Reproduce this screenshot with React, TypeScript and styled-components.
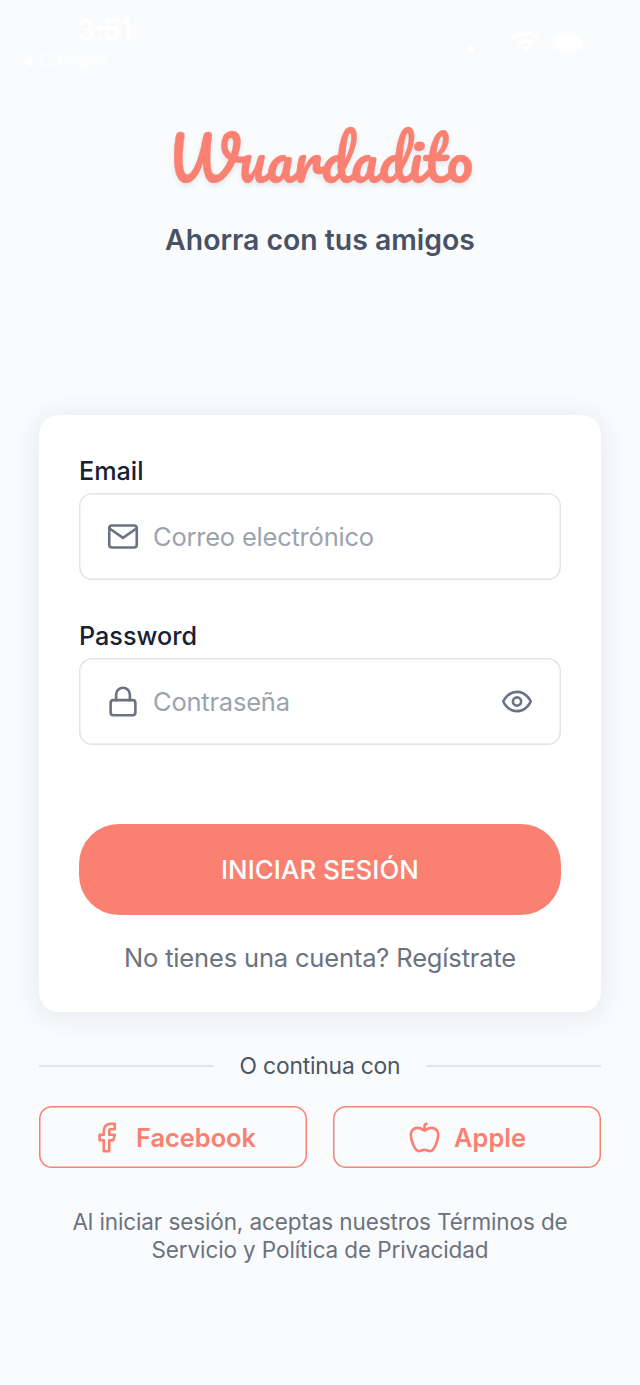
import React from "react";
import styled, { createGlobalStyle } from "styled-components";

const salmon = "#fa8072";

const GlobalStyle = createGlobalStyle`
  * { box-sizing: border-box; }
  body {
    margin: 0;
    background: #f9fbfd;
    font-family: Inter, "Liberation Sans", sans-serif;
  }
  button, input { font: inherit; }
`;

const Screen = styled.div`
  width: 640px;
  height: 1385px;
  display: flex;
  flex-direction: column;
  overflow: hidden;
`;

const StatusBar = styled.header`
  display: flex;
  justify-content: space-between;
  height: 113px;
  padding: 13px 42px 0 20px;
  color: #fff;
`;

const Clock = styled.div`
  padding-left: 57px;
  font-size: 28px;
  line-height: 34px;
  font-weight: 600;
  letter-spacing: -0.4px;
`;

const BackLink = styled.div`
  display: flex;
  align-items: center;
  gap: 6px;
  margin-top: 4px;
  font-size: 19px;
  line-height: 22px;
  letter-spacing: -0.2px;
`;

const StatusIcons = styled.svg`
  width: 132px;
  height: 24px;
  margin-top: 17px;
`;

const Logo = styled.h1`
  margin: 0;
  height: 90px;
  line-height: 90px;
  text-align: center;
  font-family: Pacifico, cursive;
  font-size: 59px;
  font-weight: 400;
  color: ${salmon};
  -webkit-text-stroke: 0.3px ${salmon};
  text-shadow: 0 3px 5px rgba(40, 60, 90, 0.1);
`;

const Tagline = styled.p`
  margin: 19px 0 0;
  text-align: center;
  font-size: 28.4px;
  line-height: 36px;
  font-weight: 600;
  color: #475264;
`;

const Card = styled.form`
  margin: 157px 39px 0;
  height: 597px;
  padding: 39px 40px 0;
  border-radius: 20px;
  background: #fff;
  box-shadow: 0 3px 26px rgba(60, 90, 120, 0.12);
`;

const Field = styled.div`
  margin-bottom: 39px;
`;

const Label = styled.label`
  display: block;
  height: 39px;
  line-height: 34px;
  font-size: 25.2px;
  font-weight: 500;
  color: #172135;
`;

const InputBox = styled.div`
  display: flex;
  align-items: center;
  gap: 13px;
  height: 87px;
  padding: 0 27px;
  box-shadow: inset 0 0 0 1.5px #e2e4ea;
  border-radius: 13px;
`;

const Input = styled.input`
  flex: 1;
  min-width: 0;
  padding: 0;
  border: 0;
  outline: 0;
  background: none;
  font-size: 25.5px;
  letter-spacing: -0.22px;
  color: #172135;
  &::placeholder { color: #9ca3af; opacity: 1; }
`;

const Glyph = styled.svg`
  flex: none;
  width: 33px;
  height: 33px;
  fill: none;
  stroke: ${(p) => p.color ?? "#6b7280"};
  stroke-width: 1.9;
  stroke-linecap: round;
  stroke-linejoin: round;
`;

const FieldGlyph = styled(Glyph)`
  width: 34px;
`;

const SubmitButton = styled.button`
  display: block;
  width: 100%;
  height: 91px;
  margin-top: 79px;
  padding: 0;
  border: 0;
  border-radius: 40px;
  background: ${salmon};
  color: #fff;
  font-size: 25.8px;
  letter-spacing: 0.1px;
  font-weight: 500;
`;

const RegisterLine = styled.p`
  margin: 26px 0 0;
  text-align: center;
  font-size: 25.5px;
  letter-spacing: -0.16px;
  line-height: 33px;
  color: #6b7280;
`;

const Divider = styled.div`
  display: flex;
  align-items: center;
  gap: 26px;
  margin: 38px 39px 0;
  height: 32px;
  font-size: 22.8px;
  line-height: 30px;
  letter-spacing: -0.18px;
  color: #4b5563;
  white-space: nowrap;
  &::before, &::after {
    content: "";
    flex: 1;
    height: 1.5px;
    background: #e1e4e8;
  }
`;

const SocialRow = styled.div`
  display: grid;
  grid-template-columns: 1fr 1fr;
  gap: 26px;
  margin: 24px 39px 0;
`;

const SocialButton = styled.button`
  display: flex;
  align-items: center;
  justify-content: center;
  gap: 13px;
  height: 62px;
  padding: 0;
  border: 0;
  box-shadow: inset 0 0 0 1.5px ${salmon};
  border-radius: 13px;
  background: none;
  color: ${salmon};
  font-size: 25.4px;
  font-weight: 600;
`;

const Legal = styled.p`
  margin: 40px 0 0;
  text-align: center;
  font-size: 22.5px;
  letter-spacing: -0.11px;
  line-height: 28px;
  color: #6b7280;
`;

export default function App() {
  return (
    <Screen>
      <GlobalStyle />
      <StatusBar>
        <div>
          <Clock>3:51</Clock>
          <BackLink>
            <svg width="13" height="12" viewBox="0 0 13 12" fill="#fff"><path d="M1 6 12 .5v11Z" /></svg>
            Cámara
          </BackLink>
        </div>
        <StatusIcons viewBox="466 30 132 24" fill="#fff">
          <rect x="467.500" y="45" width="6.500" height="8" rx="2.500" />
          <g opacity=".2">
            <rect x="477" y="43" width="5" height="10" rx="2" />
            <rect x="486" y="39" width="5" height="14" rx="2" />
            <rect x="495" y="35" width="5" height="18" rx="2" />
          </g>
          <g fill="none" stroke="#fff" strokeWidth="4">
            <path d="M513.500 38.500a18 18 0 0 1 25 0" />
            <path d="M518.500 44a11 11 0 0 1 15 0" />
          </g>
          <path d="m526 52.500-4.500-5a7 7 0 0 1 9 0Z" />
          <rect x="553" y="32.500" width="39.500" height="20" rx="6.500" fill="none" stroke="#fff" strokeOpacity=".5" strokeWidth="1.500" />
          <rect x="555.500" y="35" width="26.500" height="15" rx="4.500" />
          <path d="M594.500 39.500q2.500 3 0 6Z" opacity=".5" />
        </StatusIcons>
      </StatusBar>

      <Logo>Wuardadito</Logo>
      <Tagline>Ahorra con tus amigos</Tagline>

      <Card>
        <Field>
          <Label htmlFor="email">Email</Label>
          <InputBox>
            <FieldGlyph viewBox="0 0 24 24">
              <rect x="2" y="4" width="20" height="16" rx="2" />
              <path d="m22 6-10 7L2 6" />
            </FieldGlyph>
            <Input id="email" type="email" placeholder="Correo electrónico" />
          </InputBox>
        </Field>
        <Field>
          <Label htmlFor="password">Password</Label>
          <InputBox>
            <FieldGlyph viewBox="0 0 24 24">
              <rect x="3" y="11" width="18" height="11" rx="2" />
              <path d="M7 11V7a5 5 0 0 1 10 0v4" />
            </FieldGlyph>
            <Input id="password" type="password" placeholder="Contraseña" />
            <FieldGlyph viewBox="0 0 24 24">
              <path d="M2 12s3-7 10-7 10 7 10 7-3 7-10 7-10-7-10-7Z" />
              <circle cx="12" cy="12" r="3" />
            </FieldGlyph>
          </InputBox>
        </Field>
        <SubmitButton type="button">INICIAR SESIÓN</SubmitButton>
        <RegisterLine>No tienes una cuenta? Regístrate</RegisterLine>
      </Card>

      <Divider>O continua con</Divider>
      <SocialRow>
        <SocialButton>
          <Glyph viewBox="0 0 24 24" color={salmon}>
            <path d="M18 2h-3a5 5 0 0 0-5 5v3H7v4h3v8h4v-8h3l1-4h-4V7a1 1 0 0 1 1-1h3z" />
          </Glyph>
          Facebook
        </SocialButton>
        <SocialButton>
          <Glyph viewBox="0 0 24 24" color={salmon}>
            <path d="M12 20.940c1.500 0 2.750 1.060 4 1.060 3 0 6-8 6-12.220A4.910 4.910 0 0 0 17 5c-2.220 0-4 1.440-5 2-1-.56-2.780-2-5-2a4.900 4.900 0 0 0-5 4.780C2 14 5 22 8 22c1.250 0 2.500-1.060 4-1.060Z" />
            <path d="M12 6.800V4.300C12 3 12.400 2.100 13.500 2" />
          </Glyph>
          Apple
        </SocialButton>
      </SocialRow>
      <Legal>
        Al iniciar sesión, aceptas nuestros Términos de
        <br />
        Servicio y Política de Privacidad
      </Legal>
    </Screen>
  );
}
